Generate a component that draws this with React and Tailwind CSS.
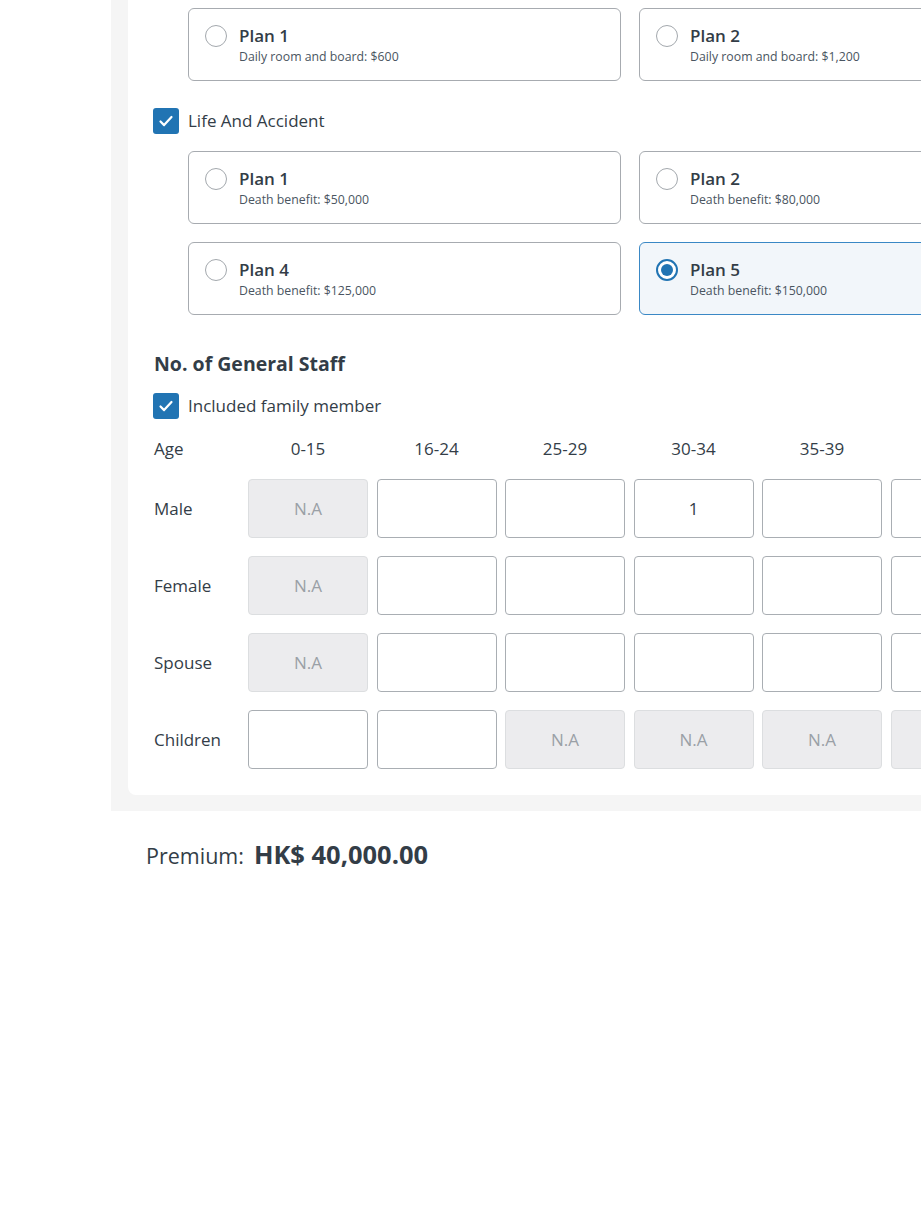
import React, { useState } from 'react';

const hospitalPlans = [
  { id: 1, label: 'Plan 1', desc: 'Daily room and board: $600' },
  { id: 2, label: 'Plan 2', desc: 'Daily room and board: $1,200' },
  { id: 3, label: 'Plan 3', desc: 'Daily room and board: $1,800' },
];

const lifePlans = [
  { id: 1, label: 'Plan 1', desc: 'Death benefit: $50,000' },
  { id: 2, label: 'Plan 2', desc: 'Death benefit: $80,000' },
  { id: 3, label: 'Plan 3', desc: 'Death benefit: $100,000' },
  { id: 4, label: 'Plan 4', desc: 'Death benefit: $125,000' },
  { id: 5, label: 'Plan 5', desc: 'Death benefit: $150,000' },
  { id: 6, label: 'Plan 6', desc: 'Death benefit: $200,000' },
];

const ages = ['0-15', '16-24', '25-29', '30-34', '35-39', '40-44', '45-49', '50-54'];

// na = index list of disabled cells per row
const rows = [
  { label: 'Male', na: [0], values: { 3: '1' } },
  { label: 'Female', na: [0], values: {} },
  { label: 'Spouse', na: [0], values: {} },
  { label: 'Children', na: [2, 3, 4, 5, 6, 7], values: {} },
];

const Checkbox = ({ checked, label, onChange }) => (
  <button type="button" onClick={onChange} className="flex items-center gap-[9px]">
    <span className={`flex h-[26px] w-[26px] items-center justify-center rounded-[3px] ${checked ? 'bg-[#2174b3]' : 'border border-[#9ea3a8] bg-white'}`}>
      {checked && (
        <svg width="18" height="18" viewBox="0 0 18 18" fill="none">
          <path d="M3.5 9.5l3.6 3.6L14.5 5" stroke="white" strokeWidth="2.2" strokeLinecap="round" strokeLinejoin="round" />
        </svg>
      )}
    </span>
    <span className="text-[17px] leading-[24px] text-[#333d47]">{label}</span>
  </button>
);

const PlanCard = ({ plan, selected, onSelect }) => (
  <button
    type="button"
    onClick={onSelect}
    className={`flex h-[73px] w-[433px] shrink-0 items-start gap-[12px] rounded-[6px] border px-4 pt-4 text-left ${
      selected ? 'border-[#3a88c5] bg-[#f2f6fa]' : 'border-[#a7abb0] bg-white'
    }`}
  >
    <span className={`flex h-[22px] w-[22px] shrink-0 items-center justify-center rounded-full bg-white ${selected ? 'border-2 border-[#2174b3]' : 'border border-[#a3a8ad]'}`}>
      {selected && <span className="h-[12px] w-[12px] rounded-full bg-[#2174b3]" />}
    </span>
    <span className="flex flex-col">
      <span className="text-[17px] font-semibold leading-[22px] text-[#333d47]">{plan.label}</span>
      <span className="mt-[1px] text-[12.3px] leading-[18px] text-[#4a5561]">{plan.desc}</span>
    </span>
  </button>
);

const PlanGrid = ({ plans, selected, onSelect }) => (
  <div className="ml-[60px] grid w-[1335px] grid-cols-[433px_433px_433px] gap-[18px]">
    {plans.map((p) => (
      <PlanCard key={p.id} plan={p} selected={selected === p.id} onSelect={() => onSelect(p.id)} />
    ))}
  </div>
);

export default function App() {
  const [hospital, setHospital] = useState(null);
  const [life, setLife] = useState(5);
  const [lifeOn, setLifeOn] = useState(true);
  const [family, setFamily] = useState(true);

  return (
    <div className="min-h-[1228px] w-[921px] overflow-hidden bg-white font-['Open_Sans',sans-serif] text-[#333d47]">
      <div className="ml-[111px] w-[1400px] bg-[#f5f5f5] pb-4 pl-[17px]">
        <div className="rounded-bl-[8px] bg-white pb-[26px] pt-2">
          <PlanGrid plans={hospitalPlans} selected={hospital} onSelect={setHospital} />

          <div className="ml-[25px] mt-[27px]">
            <Checkbox checked={lifeOn} label="Life And Accident" onChange={() => setLifeOn(!lifeOn)} />
          </div>

          <div className="mt-[17px]">
            <PlanGrid plans={lifePlans} selected={life} onSelect={setLife} />
          </div>

          <h3 className="ml-[26px] mt-[36px] text-[19.5px] font-bold leading-[26px] text-[#333d47]">No. of General Staff</h3>

          <div className="ml-[25px] mt-[16px]">
            <Checkbox checked={family} label="Included family member" onChange={() => setFamily(!family)} />
          </div>

          <div className="ml-[26px] mt-[18px] flex flex-col gap-[18px]">
            <div className="flex h-[24px] items-center">
              <span className="w-[94px] shrink-0 text-[17px] leading-[24px]">Age</span>
              <div className="flex gap-[8.5px]">
                {ages.map((a) => (
                  <span key={a} className="w-[120px] shrink-0 text-center text-[17px] leading-[24px]">{a}</span>
                ))}
              </div>
            </div>
            {rows.map((r) => (
              <div key={r.label} className="flex items-center">
                <span className="w-[94px] shrink-0 text-[17px] leading-[24px]">{r.label}</span>
                <div className="flex gap-[8.5px]">
                  {ages.map((a, i) =>
                    r.na.includes(i) ? (
                      <div
                        key={a}
                        className="flex h-[59px] w-[120px] shrink-0 items-center justify-center rounded-[4px] border border-[#dcdee0] bg-[#ececee] text-[17px] text-[#9aa0a6]"
                      >
                        N.A
                      </div>
                    ) : (
                      <input
                        key={a}
                        type="text"
                        defaultValue={r.values[i] || ''}
                        className="h-[59px] w-[120px] shrink-0 rounded-[4px] border border-[#a9aeb3] bg-white text-center text-[17px] text-[#333d47] outline-none"
                      />
                    )
                  )}
                </div>
              </div>
            ))}
          </div>
        </div>
      </div>

      <div className="ml-[146px] mt-[24px] flex items-baseline gap-[10px]">
        <span className="text-[21.5px] text-[#333d47]">Premium:</span>
        <span className="text-[25.5px] font-bold text-[#333d47]">HK$ 40,000.00</span>
      </div>
    </div>
  );
}
